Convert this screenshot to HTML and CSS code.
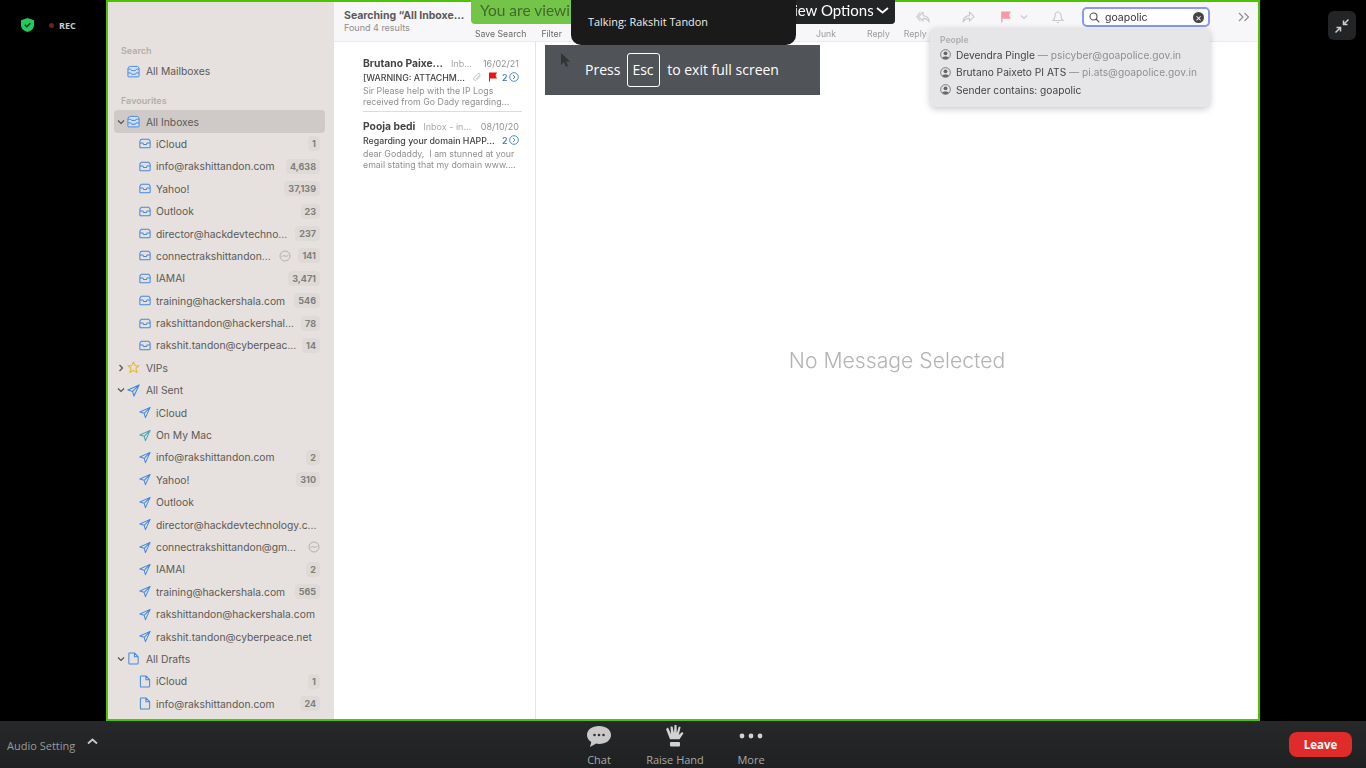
FILE: index.html
```html
<!DOCTYPE html>
<html lang="en">
<head>
  <meta charset="UTF-8">
  <title>Zoom - Rakshit Tandon's screen</title>
  <link rel="stylesheet" href="styles.css">
</head>
<body>

  <svg class="icon-defs" width="0" height="0">
    <symbol id="i-inbox" viewBox="0 0 14 12"><path d="M2.500 1h9L13 3.500V10a1 1 0 0 1-1 1H2a1 1 0 0 1-1-1V3.500zM1 5.500h3.500l1 1.600h3l1-1.600H13" fill="none" stroke="currentColor" stroke-width="1.200" stroke-linejoin="round"/></symbol>
    <symbol id="i-allinbox" viewBox="0 0 14 13"><path d="M2.500 1h9L13 3v8.500a.8.8 0 0 1-.8.8H1.800a.8.8 0 0 1-.8-.8V3zM1 4h3l1 1.500h4l1-1.500h3M1 8h3l1 1.500h4l1-1.500h3" fill="#cfe0f5" stroke="currentColor" stroke-width="1" stroke-linejoin="round"/></symbol>
    <symbol id="i-sent" viewBox="0 0 14 14"><path d="M13 1 1 6.500l5 1.500 1.500 5zM6 8l7-7" fill="none" stroke="currentColor" stroke-width="1.200" stroke-linejoin="round"/></symbol>
    <symbol id="i-draft" viewBox="0 0 12 14"><path d="M2 1h5l4 4v7a1 1 0 0 1-1 1H2a1 1 0 0 1-1-1V2a1 1 0 0 1 1-1zM7 1v4h4" fill="none" stroke="currentColor" stroke-width="1.100" stroke-linejoin="round"/></symbol>
    <symbol id="i-star" viewBox="0 0 14 14"><path d="m7 1 1.800 4H13l-3.400 2.800L11 12.500 7 10l-4 2.500 1.400-4.700L1 5h4.200z" fill="none" stroke="currentColor" stroke-width="1.100" stroke-linejoin="round"/></symbol>
    <symbol id="i-down" viewBox="0 0 8 8"><path d="m1 2.500 3 3 3-3" fill="none" stroke="currentColor" stroke-width="1.200"/></symbol>
    <symbol id="i-right" viewBox="0 0 8 8"><path d="m2.500 1 3 3-3 3" fill="none" stroke="currentColor" stroke-width="1.200"/></symbol>
    <symbol id="i-activity" viewBox="0 0 12 12"><circle cx="6" cy="6" r="5" fill="none" stroke="currentColor" stroke-width=".8"/><path d="M2.800 6.800C4.300 3.800 7.700 8.200 9.200 5.200" fill="none" stroke="currentColor" stroke-width=".8"/></symbol>
    <symbol id="i-person" viewBox="0 0 12 12"><circle cx="6" cy="6" r="5.300" fill="none" stroke="currentColor" stroke-width=".9"/><circle cx="6" cy="4.700" r="2.100" fill="currentColor"/><path d="M2.500 9.800C3 7.800 9 7.800 9.500 9.800 8 11.300 4 11.300 2.500 9.800z" fill="currentColor"/></symbol>
    <symbol id="i-thread" viewBox="0 0 10 10"><circle cx="5" cy="5" r="4.300" fill="none" stroke="currentColor" stroke-width=".9"/><path d="m4 3 2 2-2 2" fill="none" stroke="currentColor" stroke-width=".9"/></symbol>
    <symbol id="i-flag" viewBox="0 0 10 10"><path d="M1 .5h8L7.500 3.500 9 6.500H2v3H1z" fill="currentColor"/></symbol>
  </svg>

  <div class="stage">
    <div class="side side-left">
      <svg class="shield" width="13" height="14" viewBox="0 0 13 14"><path d="M6.500 0 13 2.200V7c0 3.500-2.800 5.900-6.500 7C2.800 12.900 0 10.500 0 7V2.200z" fill="#21c95f"/><path d="m3.800 6.800 2 2 3.500-3.600" fill="none" stroke="#07331a" stroke-width="1.500"/></svg>
      <span class="rec-dot"></span>
      <span class="rec-text">REC</span>
    </div>

    <div class="frame">
      <div class="app">
        <aside class="sidebar">
          <div class="side-heading">Search</div>
          <div class="row row-top"><span class="caret"></span><svg class="ic ic-lg"><use href="#i-allinbox"/></svg><span class="name">All Mailboxes</span></div>

          <div class="side-heading fav">Favourites</div>
          <div class="row row-top selected"><svg class="caret"><use href="#i-down"/></svg><svg class="ic ic-lg"><use href="#i-allinbox"/></svg><span class="name">All Inboxes</span></div>
          <div class="row"><svg class="ic"><use href="#i-inbox"/></svg><span class="name">iCloud</span><span class="badge">1</span></div>
          <div class="row"><svg class="ic"><use href="#i-inbox"/></svg><span class="name">info@rakshittandon.com</span><span class="badge">4,638</span></div>
          <div class="row"><svg class="ic"><use href="#i-inbox"/></svg><span class="name">Yahoo!</span><span class="badge">37,139</span></div>
          <div class="row"><svg class="ic"><use href="#i-inbox"/></svg><span class="name">Outlook</span><span class="badge">23</span></div>
          <div class="row"><svg class="ic"><use href="#i-inbox"/></svg><span class="name">director@hackdevtechno...</span><span class="badge">237</span></div>
          <div class="row"><svg class="ic"><use href="#i-inbox"/></svg><span class="name">connectrakshittandon...</span><svg class="activity"><use href="#i-activity"/></svg><span class="badge">141</span></div>
          <div class="row"><svg class="ic"><use href="#i-inbox"/></svg><span class="name">IAMAI</span><span class="badge">3,471</span></div>
          <div class="row"><svg class="ic"><use href="#i-inbox"/></svg><span class="name">training@hackershala.com</span><span class="badge">546</span></div>
          <div class="row"><svg class="ic"><use href="#i-inbox"/></svg><span class="name">rakshittandon@hackershal...</span><span class="badge">78</span></div>
          <div class="row"><svg class="ic"><use href="#i-inbox"/></svg><span class="name">rakshit.tandon@cyberpeac...</span><span class="badge">14</span></div>

          <div class="row row-top"><svg class="caret"><use href="#i-right"/></svg><svg class="ic ic-lg star"><use href="#i-star"/></svg><span class="name">VIPs</span></div>
          <div class="row row-top"><svg class="caret"><use href="#i-down"/></svg><svg class="ic ic-lg"><use href="#i-sent"/></svg><span class="name">All Sent</span></div>
          <div class="row"><svg class="ic"><use href="#i-sent"/></svg><span class="name">iCloud</span></div>
          <div class="row"><svg class="ic teal"><use href="#i-sent"/></svg><span class="name">On My Mac</span></div>
          <div class="row"><svg class="ic"><use href="#i-sent"/></svg><span class="name">info@rakshittandon.com</span><span class="badge">2</span></div>
          <div class="row"><svg class="ic"><use href="#i-sent"/></svg><span class="name">Yahoo!</span><span class="badge">310</span></div>
          <div class="row"><svg class="ic"><use href="#i-sent"/></svg><span class="name">Outlook</span></div>
          <div class="row"><svg class="ic"><use href="#i-sent"/></svg><span class="name">director@hackdevtechnology.c...</span></div>
          <div class="row"><svg class="ic"><use href="#i-sent"/></svg><span class="name">connectrakshittandon@gm...</span><svg class="activity"><use href="#i-activity"/></svg></div>
          <div class="row"><svg class="ic"><use href="#i-sent"/></svg><span class="name">IAMAI</span><span class="badge">2</span></div>
          <div class="row"><svg class="ic"><use href="#i-sent"/></svg><span class="name">training@hackershala.com</span><span class="badge">565</span></div>
          <div class="row"><svg class="ic"><use href="#i-sent"/></svg><span class="name">rakshittandon@hackershala.com</span></div>
          <div class="row"><svg class="ic"><use href="#i-sent"/></svg><span class="name">rakshit.tandon@cyberpeace.net</span></div>

          <div class="row row-top"><svg class="caret"><use href="#i-down"/></svg><svg class="ic ic-lg"><use href="#i-draft"/></svg><span class="name">All Drafts</span></div>
          <div class="row"><svg class="ic"><use href="#i-draft"/></svg><span class="name">iCloud</span><span class="badge">1</span></div>
          <div class="row"><svg class="ic"><use href="#i-draft"/></svg><span class="name">info@rakshittandon.com</span><span class="badge">24</span></div>
        </aside>

        <div class="content">
          <header class="toolbar">
            <div class="search-title">
              <div class="title">Searching “All Inboxe...</div>
              <div class="found">Found 4 results</div>
            </div>
            <div class="tool-rows">
              <div class="tool-icons">
                <svg class="tool-ic" width="16" height="13" viewBox="0 0 18 14"><path d="M8 1 3 6l5 5V8c3 0 5 1 7 4 0-4-3-7-7-7zM5 1 0.800 6 5 11" fill="none" stroke="#c9c9cc" stroke-width="1.200" stroke-linejoin="round"/></svg>
                <svg class="tool-ic fwd" width="13" height="13" viewBox="0 0 14 14"><path d="m8 1 5 5-5 5V8c-3 0-5 1-7 4 0-4 3-7 7-7z" fill="none" stroke="#c9c9cc" stroke-width="1.200" stroke-linejoin="round"/></svg>
                <svg class="tool-flag" width="12" height="12"><use href="#i-flag"/></svg>
                <svg class="tool-flag-caret" width="8" height="8"><use href="#i-down"/></svg>
                <svg class="tool-ic bell" width="12" height="13" viewBox="0 0 12 13"><path d="M6 1C3.800 1 3 3 3 5c0 2.500-1 3.500-2 4.500h10C10 8.500 9 7.500 9 5c0-2-.8-4-3-4zM4.800 11.500h2.400" fill="none" stroke="#c9c9cc" stroke-width="1.100"/></svg>
                <div class="search-box">
                  <svg width="11" height="11" viewBox="0 0 11 11"><circle cx="4.500" cy="4.500" r="3.500" fill="none" stroke="#555" stroke-width="1.100"/><path d="m7 7 3.300 3.300" stroke="#555" stroke-width="1.200"/></svg>
                  <span class="search-text">goapolic</span>
                  <span class="search-clear">×</span>
                </div>
                <svg class="more-tools" width="12" height="10" viewBox="0 0 12 10"><path d="m1 1 4 4-4 4M6.500 1l4 4-4 4" fill="none" stroke="#8b8b8e" stroke-width="1.100"/></svg>
              </div>
              <div class="tool-labels">
                <span class="save-search">Save Search</span>
                <span class="filter">Filter</span>
                <span class="junk">Junk</span>
                <span class="reply">Reply</span>
                <span class="reply-all">Reply</span>
              </div>
            </div>
          </header>

          <div class="panes">
            <section class="msg-list">
              <article class="msg">
                <div class="msg-line">
                  <span class="sender">Brutano Paixe...</span>
                  <span class="box">Inb...</span>
                  <span class="date">16/02/21</span>
                </div>
                <div class="msg-line">
                  <span class="subject">[WARNING: ATTACHM...</span>
                  <svg class="clip" width="10" height="10" viewBox="0 0 10 10"><path d="M8.500 4 4.500 8a1.700 1.700 0 0 1-2.400-2.400l4-4a1.100 1.100 0 0 1 1.600 1.600l-3.700 3.700" fill="none" stroke="#bbb" stroke-width=".9"/></svg>
                  <svg class="msg-flag" width="10" height="10"><use href="#i-flag"/></svg>
                  <span class="count">2</span>
                  <svg class="thread" width="10" height="10"><use href="#i-thread"/></svg>
                </div>
                <p class="preview">Sir Please help with the IP Logs<br>received from Go Dady regarding...</p>
              </article>
              <article class="msg">
                <div class="msg-line">
                  <span class="sender">Pooja bedi</span>
                  <span class="box">Inbox - in...</span>
                  <span class="date">08/10/20</span>
                </div>
                <div class="msg-line">
                  <span class="subject">Regarding your domain HAPP...</span>
                  <span class="count">2</span>
                  <svg class="thread" width="10" height="10"><use href="#i-thread"/></svg>
                </div>
                <p class="preview">dear Godaddy,&nbsp; I am stunned at your<br>email stating that my domain www....</p>
              </article>
            </section>
            <main class="detail">No Message Selected</main>
          </div>
        </div>

        <div class="search-menu">
          <div class="menu-heading">People</div>
          <div class="menu-row"><svg class="person" width="11" height="11"><use href="#i-person"/></svg>Devendra Pingle <span class="addr">— psicyber@goapolice.gov.in</span></div>
          <div class="menu-row"><svg class="person" width="11" height="11"><use href="#i-person"/></svg>Brutano Paixeto PI ATS <span class="addr">— pi.ats@goapolice.gov.in</span></div>
          <div class="menu-row"><svg class="person" width="11" height="11"><use href="#i-person"/></svg>Sender contains: goapolic</div>
        </div>
      </div>

      <!-- zoom's own overlays, on top of the shared screen -->
      <div class="share-banner">
        <span class="share-text">You are viewing</span>
        <span class="view-options">View Options
          <svg width="13" height="7" viewBox="0 0 13 7"><path d="m1 1 5.500 4.500L12 1" fill="none" stroke="#fff" stroke-width="1.800"/></svg>
        </span>
      </div>
      <div class="talking">Talking: Rakshit Tandon</div>
      <div class="esc-hint">Press <span class="esc-key">Esc</span> to exit full screen</div>
      <svg class="cursor" width="10" height="15" viewBox="0 0 10 15"><path d="M1 0v12l3-3 2 5 2-1-2-4.500h4z" fill="#333"/></svg>
    </div>

    <div class="side side-right">
      <button class="exit-full">
        <svg width="16" height="16" viewBox="0 0 16 16"><path d="M9.500 6.500 14.500 1.500M9.500 2.500v4h4M6.500 9.500l-5 5M2.500 9.500h4v4" fill="none" stroke="#ccc" stroke-width="1.500"/></svg>
      </button>
    </div>
  </div>

  <footer class="bar">
    <div class="audio">Audio Setting
      <svg width="11" height="7" viewBox="0 0 11 7"><path d="m1 5.500 4.500-4 4.500 4" fill="none" stroke="#c9c9c9" stroke-width="1.800"/></svg>
    </div>
    <div class="bar-center">
      <div class="bar-btn">
        <svg width="26" height="23" viewBox="0 0 26 23"><path d="M13 1C6 1 1 4.800 1 10c0 3 1.700 5.500 4.300 7.100L4 22l6.200-3.400c.9.200 1.800.3 2.800.3 7 0 12-3.700 12-8.900S20 1 13 1z" fill="#c9c9c9"/><circle cx="8.500" cy="10" r="1.300" fill="#333"/><circle cx="13" cy="10" r="1.300" fill="#333"/><circle cx="17.500" cy="10" r="1.300" fill="#333"/></svg>
        <span>Chat</span>
      </div>
      <div class="bar-btn">
        <svg width="20" height="23" viewBox="0 0 20 23"><path d="M3 2.500 6 9 5.500 1.500l2 0L9 8l.5-8h2l.3 8 2-6.500 1.800.6L13.800 10l3.200-3 1.500 1.300-4 6H5L1 4z" fill="#d2d2d2"/><rect x="5" y="17" width="10" height="4.500" rx="1" fill="#d2d2d2"/></svg>
        <span>Raise Hand</span>
      </div>
      <div class="bar-btn">
        <svg width="26" height="23" viewBox="0 0 26 23"><circle cx="4" cy="11" r="2.400" fill="#d2d2d2"/><circle cx="13" cy="11" r="2.400" fill="#d2d2d2"/><circle cx="22" cy="11" r="2.400" fill="#d2d2d2"/></svg>
        <span>More</span>
      </div>
    </div>
    <button class="leave">Leave</button>
  </footer>

</body>
</html>
```

FILE: styles.css
```css
* {
  box-sizing: border-box;
}

html, body {
  height: 100%;
}

body {
  margin: 0;
  background: #000;
  font-family: Inter, "Liberation Sans", sans-serif;
  overflow: hidden;
  display: flex;
  flex-direction: column;
}

.icon-defs {
  position: absolute;
}

.stage {
  height: 721px;
  display: flex;
}

.side {
  width: 106px;
  flex: none;
  display: flex;
}

.side-left {
  align-items: center;
  align-self: flex-start;
  height: 50px;
  padding-left: 21px;
}

.shield {
  margin-right: 15px;
}

.rec-dot {
  width: 5px;
  height: 5px;
  border-radius: 50%;
  background: #6f2020;
  margin-right: 5px;
}

.rec-text {
  color: #c9c9c9;
  font: bold 9px "Open Sans", sans-serif;
}

.side-right {
  justify-content: flex-end;
  padding: 11px 10px 0 0;
}

.exit-full {
  width: 28px;
  height: 29px;
  border: none;
  border-radius: 6px;
  background: #232426;
  padding: 0;
  display: flex;
  align-items: center;
  justify-content: center;
}

.frame {
  position: relative;
  flex: 1;
  border: 2px solid #4fc300;
  background: #fff;
}

.app {
  height: 100%;
  display: flex;
  filter: blur(0.35px);
}

/* sidebar */
.sidebar {
  width: 226px;
  flex: none;
  background: #e6e1de;
  padding-top: 43px;
  overflow: hidden;
  color: #5b5a59;
  font-size: 10.3px;
}

.side-heading {
  height: 12px;
  line-height: 12px;
  margin: 0 0 3px 13px;
  font-size: 9px;
  font-weight: 600;
  color: #b0aeac;
}

.side-heading.fav {
  margin-top: 13px;
  margin-bottom: 3px;
}

.row {
  height: 22.4px;
  margin: 0 9px 0 6px;
  padding: 0 5px 0 25px;
  display: flex;
  align-items: center;
  border-radius: 4px;
  white-space: nowrap;
}

.row-top {
  padding-left: 3px;
}

.selected {
  background: #cfcac7;
}

.caret {
  width: 8px;
  height: 8px;
  color: #555;
  margin-right: 2px;
  flex: none;
}

.ic {
  width: 12px;
  height: 13px;
  color: #4488e0;
  margin-right: 5px;
  flex: none;
}

.ic-lg {
  width: 13px;
  height: 13px;
  margin-right: 6px;
}

.star {
  color: #e2b93a;
}

.teal {
  color: #3fa7b5;
}

.name {
  flex: 1;
  overflow: hidden;
}

.badge {
  background: #dedad7;
  color: #817d7b;
  font-size: 9px;
  font-weight: 700;
  padding: 2px 4px;
  border-radius: 4px;
  margin-left: 4px;
}

.activity {
  width: 12px;
  height: 12px;
  color: #a5a3a1;
  margin-left: 2px;
  flex: none;
}

.activity + .badge {
  margin-left: 7px;
}

/* toolbar and panes */
.content {
  flex: 1;
  min-width: 0;
  display: flex;
  flex-direction: column;
}

.toolbar {
  height: 40px;
  flex: none;
  background: #f7f6f8;
  border-bottom: 1px solid #eaeaec;
  display: flex;
}

.search-title {
  width: 130px;
  padding: 7px 0 0 10px;
  flex: none;
  white-space: nowrap;
}

.title {
  font-size: 10.5px;
  font-weight: 700;
  color: #5a5a5a;
  line-height: 13px;
}

.found {
  font-size: 9px;
  color: #8e8e8e;
  line-height: 11px;
}

.tool-rows {
  flex: 1;
  min-width: 0;
}

.tool-icons {
  height: 27px;
  padding: 3px 8px 0 0;
  display: flex;
  align-items: center;
  justify-content: flex-end;
}

.tool-ic {
  flex: none;
}

.fwd {
  margin-left: 30px;
}

.tool-flag {
  color: #f49aa6;
  margin-left: 25px;
  flex: none;
}

.tool-flag-caret {
  color: #c9c9cc;
  margin-left: 8px;
  flex: none;
}

.bell {
  margin-left: 24px;
}

.search-box {
  width: 128px;
  height: 20px;
  margin-left: 18px;
  border: 2px solid #8a99ef;
  border-radius: 5px;
  background: #fff;
  padding: 0 4px 0 5px;
  display: flex;
  align-items: center;
  font-size: 10.5px;
  color: #333;
}

.search-text {
  flex: 1;
  margin-left: 5px;
}

.search-clear {
  width: 11px;
  height: 11px;
  border-radius: 50%;
  background: #444;
  color: #fff;
  font-size: 10px;
  line-height: 10px;
  text-align: center;
}

.more-tools {
  margin-left: 28px;
  flex: none;
}

.tool-labels {
  display: flex;
  font-size: 8.7px;
  line-height: 11px;
  color: #9a9a9c;
  white-space: nowrap;
}

.save-search {
  margin-left: 11px;
  color: #6a6a6a;
}

.filter {
  margin-left: 15px;
  color: #6a6a6a;
}

.junk {
  margin-left: 254px;
}

.reply {
  margin-left: 31px;
}

.reply-all {
  margin-left: 14px;
}

.panes {
  flex: 1;
  display: flex;
  min-height: 0;
}

.msg-list {
  width: 202px;
  flex: none;
  border-right: 1px solid #e4e4e4;
  padding: 13px 13px 0 29px;
}

.msg {
  height: 57px;
  padding-top: 1px;
  border-bottom: 1px solid #dcdcdc;
  padding-right: 3px;
  margin-bottom: 6px;
}

.msg:last-child {
  border-bottom: none;
}

.msg-line {
  height: 14px;
  display: flex;
  align-items: center;
  white-space: nowrap;
}

.sender {
  font-size: 10.3px;
  font-weight: 700;
  color: #444;
}

.box {
  font-size: 9px;
  color: #a8a8a8;
  margin-left: 8px;
}

.date {
  font-size: 9px;
  color: #929292;
  margin-left: auto;
}

.subject {
  font-size: 8.8px;
  font-weight: 500;
  color: #444;
  margin-right: auto;
}

.clip {
  margin-right: 6px;
}

.msg-flag {
  color: #ee1111;
  margin-right: 4px;
}

.count {
  font-size: 9px;
  font-weight: 500;
  color: #3a6fc4;
  margin-right: 1.500px;
}

.thread {
  color: #3a80d2;
}

.preview {
  margin: 0.500px 0 0;
  font-size: 8.8px;
  line-height: 11.500px;
  color: #8f8f8f;
  white-space: nowrap;
}

.detail {
  flex: 1;
  display: flex;
  align-items: center;
  justify-content: center;
  padding-bottom: 41px;
  font-size: 21.200px;
  font-weight: 300;
  color: #b4b4b4;
}

.search-menu {
  position: absolute;
  left: 822px;
  top: 26px;
  width: 280px;
  height: 79px;
  padding: 6px 10px;
  background: #e6e5e8;
  border-radius: 6px;
  box-shadow: 0 2px 7px rgba(0,0,0,0.22);
  font-size: 10.200px;
  color: #444;
}

.menu-heading {
  height: 12px;
  line-height: 12px;
  font-size: 8.500px;
  font-weight: 700;
  color: #b1b0b3;
}

.menu-row {
  height: 17.500px;
  display: flex;
  align-items: center;
  white-space: pre;
}

.person {
  color: #666;
  margin-right: 5px;
  flex: none;
}

.addr {
  color: #8f8f92;
}

/* zoom overlays */
.share-banner {
  position: absolute;
  left: 363px;
  top: -2px;
  width: 424px;
  height: 24px;
  background: #75c44a;
  border-radius: 0 0 4px 4px;
  display: flex;
  font: 15px Lato, sans-serif;
  white-space: nowrap;
  overflow: hidden;
}

.share-text {
  flex: 1;
  padding-left: 9px;
  font-size: 15.500px;
  line-height: 21px;
  color: #3f6a2a;
}

.view-options {
  width: 113px;
  flex: none;
  background: #232426;
  color: #fff;
  line-height: 21px;
  padding-left: 2px;
}

.view-options svg {
  margin-left: -2px;
  vertical-align: 2px;
}

.talking {
  position: absolute;
  left: 463px;
  top: -2px;
  width: 225px;
  height: 45px;
  padding-left: 17px;
  background: #1a1a1a;
  border-radius: 0 0 10px 10px;
  color: #eee;
  font: 10.900px/44px "Open Sans", sans-serif;
}

.esc-hint {
  position: absolute;
  left: 437px;
  top: 43px;
  width: 275px;
  height: 50px;
  padding: 0 0 1px 40px;
  background: #505357;
  color: #fff;
  font: 14px "Open Sans", sans-serif;
  display: flex;
  align-items: center;
  white-space: pre;
}

.esc-key {
  width: 33px;
  height: 34px;
  margin: 0 4px 0 2.500px;
  border: 1px solid #fff;
  border-radius: 3px;
  display: flex;
  align-items: center;
  justify-content: center;
}

.cursor {
  position: absolute;
  left: 452px;
  top: 51px;
}

/* bottom bar */
.bar {
  height: 47px;
  flex: none;
  background: linear-gradient(#26282a, #1f2022);
  position: relative;
  display: flex;
  align-items: center;
  justify-content: space-between;
  padding: 0 14px 0 7px;
}

.audio {
  display: flex;
  align-items: center;
  gap: 12px;
  color: #9a9a9a;
  font: 11px "Open Sans", sans-serif;
  padding-top: 2px;
}

.audio svg {
  margin-top: -8px;
}

.bar-center {
  position: absolute;
  left: 561px;
  top: 0;
  display: flex;
}

.bar-btn {
  width: 76px;
  height: 47px;
  display: flex;
  flex-direction: column;
  align-items: center;
  padding-top: 4px;
  color: #a8a8a8;
  font: 11px "Open Sans", sans-serif;
}

.bar-btn span {
  margin-top: 4px;
}

.leave {
  width: 63px;
  height: 25px;
  border: none;
  border-radius: 8px;
  background: #e02b2b;
  color: #fff;
  font: bold 11.500px "Open Sans", sans-serif;
}
```
